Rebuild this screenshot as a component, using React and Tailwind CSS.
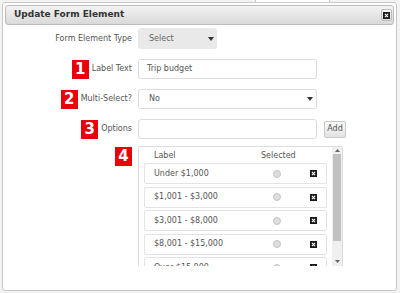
import React from "react";

const font = { fontFamily: '"DejaVu Sans", Verdana, sans-serif' };

function Badge({ n }) {
  return (
    <div className="flex h-[19px] w-[17px] items-center justify-center bg-[#e8000b] text-[15px] font-bold leading-none text-white">
      {n}
    </div>
  );
}

function Arrow() {
  return (
    <svg width="6" height="4" viewBox="0 0 6 4" className="shrink-0">
      <path d="M0 0 L6 0 L3 4 Z" fill="#333" />
    </svg>
  );
}

function XIcon({ size = 8 }) {
  return (
    <svg width={size} height={size} viewBox="0 0 8 8" className="shrink-0">
      <rect x="0" y="0" width="8" height="8" fill="#1a1a1a" />
      <path d="M2.2 2.2 L5.8 5.8 M5.8 2.2 L2.2 5.8" stroke="#fff" strokeWidth="1.3" />
    </svg>
  );
}

const rows = ["Under $1,000", "$1,001 - $3,000", "$3,001 - $8,000", "$8,001 - $15,000", "Over $15,000"];

export default function App() {
  return (
    <div className="relative h-[293px] w-[400px] overflow-hidden bg-[#f2f2f2] text-[8px] text-[#555]" style={font}>
      <div className="absolute left-[255px] top-0 h-[3px] w-[75px] border-x border-b border-[#ccc] bg-white" />
      <div className="ml-[2px] mt-[2px] h-[289px] w-[395px] rounded-[3px] border border-[#c8c8c8] bg-white p-[2px]">
        {/* header */}
        <div className="flex h-[20px] items-center justify-between rounded-[3px] border border-[#bdbdbd] bg-gradient-to-b from-[#f3f3f3] to-[#d9d9d9] pl-[8px] pr-[1px]">
          <span className="text-[9px] font-bold text-[#333]">Update Form Element</span>
          <div className="flex h-[12px] w-[11px] items-center justify-center rounded-[2px] border border-[#bbb] bg-gradient-to-b from-[#fafafa] to-[#dedede]">
            <XIcon size={7} />
          </div>
        </div>

        {/* body */}
        <div className="flex flex-col">
          {/* row 1 */}
          <div className="mt-[3px] flex h-[21px] items-center">
            <div className="flex w-[127px] items-center justify-end">
              <span>Form Element Type</span>
            </div>
            <div className="ml-[6px] flex h-[21px] w-[79px] items-center justify-between rounded-[3px] bg-[#e9e9e9] pl-[11px] pr-[3px]">
              <span className="text-[#666]">Select</span>
              <Arrow />
            </div>
          </div>

          {/* row 2 */}
          <div className="mt-[10px] flex h-[20px] items-center">
            <div className="flex w-[127px] items-center justify-end gap-[3px]">
              <Badge n="1" />
              <span>Label Text</span>
            </div>
            <div className="ml-[6px] flex h-[20px] w-[179px] items-center rounded-[3px] border border-[#dcdcdc] pl-[8px] text-[#555]">
              Trip budget
            </div>
          </div>

          {/* row 3 */}
          <div className="mt-[10px] flex h-[20px] items-center">
            <div className="flex w-[127px] items-center justify-end gap-[3px]">
              <Badge n="2" />
              <span>Multi-Select?</span>
            </div>
            <div className="ml-[6px] flex h-[20px] w-[179px] items-center justify-between rounded-[3px] border border-[#dcdcdc] pl-[10px] pr-[3px] text-[#555]">
              <span>No</span>
              <Arrow />
            </div>
          </div>

          {/* row 4 */}
          <div className="mt-[10px] flex h-[20px] items-center">
            <div className="flex w-[127px] items-center justify-end gap-[3px]">
              <Badge n="3" />
              <span>Options</span>
            </div>
            <div className="ml-[6px] h-[20px] w-[179px] rounded-[3px] border border-[#dcdcdc]" />
            <div className="ml-[7px] flex h-[17px] w-[22px] items-center justify-center rounded-[2px] border border-[#c9c9c9] bg-gradient-to-b from-[#fafafa] to-[#e2e2e2] text-[#555]">
              Add
            </div>
          </div>

          {/* row 5 */}
          <div className="mt-[7px] flex items-start">
            <div className="flex w-[127px] justify-end pt-px">
              <Badge n="4" />
            </div>
            <div className="ml-[6px] flex h-[120px] w-[205px] overflow-hidden rounded-t-[3px] border-x border-t border-[#dcdcdc]">
              <div className="flex w-[194px] flex-col pl-[5px]">
                <div className="flex h-[16px] shrink-0 items-end pb-[1px] text-[#555]">
                  <span className="ml-[10px] w-[107px]">Label</span>
                  <span>Selected</span>
                </div>
                <div className="flex flex-col gap-[2.5px]">
                  {rows.map((r) => (
                    <div key={r} className="flex h-[21px] w-[183px] shrink-0 items-center rounded-[2px] border border-[#e3e3e3] pl-[9px]">
                      <span className="w-[119px]">{r}</span>
                      <span className="h-[8px] w-[8px] rounded-full border border-[#c4c4c4] bg-[#dedede]" />
                      <span className="ml-[29px] flex">
                        <XIcon size={7} />
                      </span>
                    </div>
                  ))}
                </div>
              </div>
              <div className="ml-[5px] flex w-[10px] flex-col items-center bg-[#f0f0f0]">
                <div className="flex h-[7px] items-center">
                  <svg width="5" height="3" viewBox="0 0 5 3"><path d="M0 3 L5 3 L2.5 0 Z" fill="#666" /></svg>
                </div>
                <div className="h-[87px] w-[8px] bg-[#c1c1c1]" />
                <div className="mt-auto flex h-[9px] items-center">
                  <svg width="5" height="3" viewBox="0 0 5 3"><path d="M0 0 L5 0 L2.5 3 Z" fill="#666" /></svg>
                </div>
              </div>
            </div>
          </div>
        </div>
      </div>
    </div>
  );
}
